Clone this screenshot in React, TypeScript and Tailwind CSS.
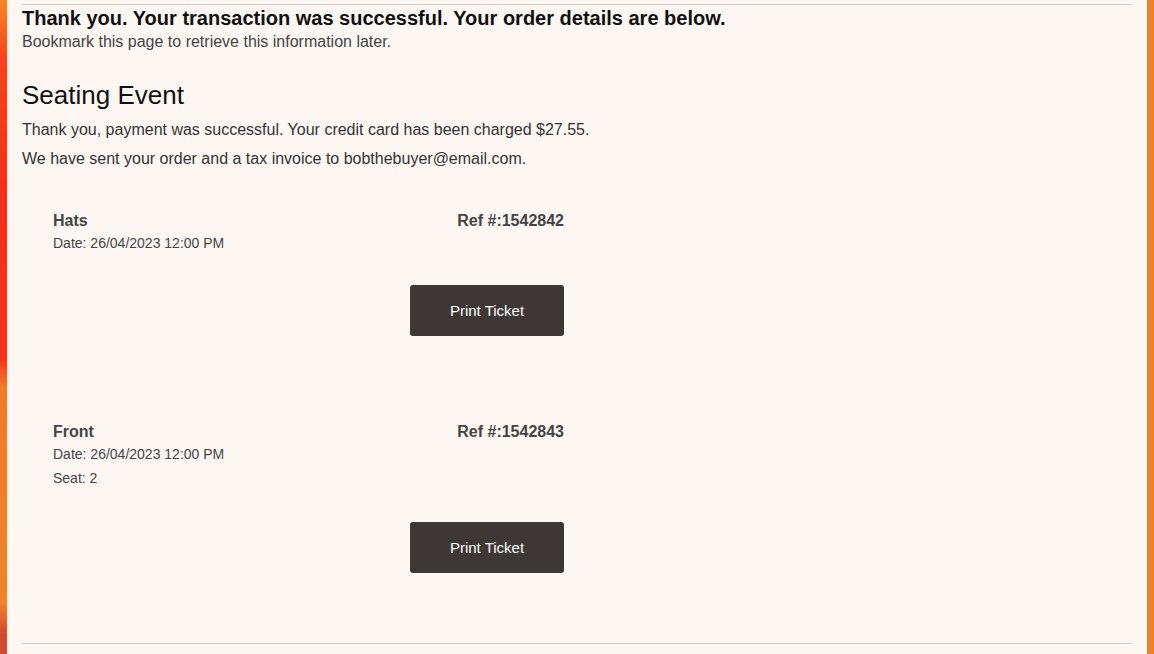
const tickets = [
  { name: 'Hats', ref: '1542842', date: '26/04/2023 12:00 PM', seat: null as string | null },
  { name: 'Front', ref: '1542843', date: '26/04/2023 12:00 PM', seat: '2' },
];

const Ticket = ({ name, ref, date, seat }: { name: string; ref: string; date: string; seat: string | null }) => (
  <div className="w-[511px] ml-[31px]">
    <div className="flex justify-between items-start">
      <div className="text-[16px] leading-[20px] font-bold text-[#444]">{name}</div>
      <div className="text-[16px] leading-[20px] font-bold text-[#444]">Ref #:{ref}</div>
    </div>
    <div className="mt-[2px] text-[14px] leading-[20px] text-[#444]">Date: {date}</div>
    {seat && <div className="mt-[4px] text-[14px] leading-[20px] text-[#444]">Seat: {seat}</div>}
    <div className={`flex justify-end ${seat ? 'mt-[34px]' : 'mt-[32px]'}`}>
      <button
        type="button"
        className="w-[154px] h-[51px] pt-[2px] rounded-[3px] bg-[#3d3835] text-white text-[15px]"
      >
        Print Ticket
      </button>
    </div>
  </div>
);

export default function App() {
  return (
    <div className="flex h-[654px] w-full bg-[#fdf7f4] font-['Liberation_Sans',Arial,sans-serif] overflow-hidden">
      <div className="w-[7px] shrink-0 bg-[linear-gradient(180deg,#f3892a_0%,#f5441c_9%,#f3301a_30%,#f3361b_55%,#ee7a2c_59%,#ef842c_92%,#cf4a32_97%)]" />
      <div className="flex-1 px-[15px]">
        <div className="mt-[4px] border-t border-[#d4cbc7]" />
        <h1 className="mt-[1px] text-[20px] leading-[24px] font-bold text-[#111]">
          Thank you. Your transaction was successful. Your order details are below.
        </h1>
        <p className="mt-[2px] text-[16px] leading-[20px] text-[#444]">Bookmark this page to retrieve this information later.</p>
        <h2 className="mt-[28px] text-[26px] leading-[30px] text-[#111]">Seating Event</h2>
        <p className="mt-[10px] text-[16px] leading-[20px] text-[#333]">
          Thank you, payment was successful. Your credit card has been charged $27.55.
        </p>
        <p className="mt-[9px] text-[16px] leading-[20px] text-[#333]">
          We have sent your order and a tax invoice to bobthebuyer@email.com.
        </p>
        <div className="mt-[42px]">
          <Ticket {...tickets[0]} />
        </div>
        <div className="mt-[86px]">
          <Ticket {...tickets[1]} />
        </div>
        <div className="mt-[70px] border-t border-[#d4cbc7]" />
      </div>
      <div className="w-[7px] shrink-0 bg-[#f07e22]" />
    </div>
  );
}
